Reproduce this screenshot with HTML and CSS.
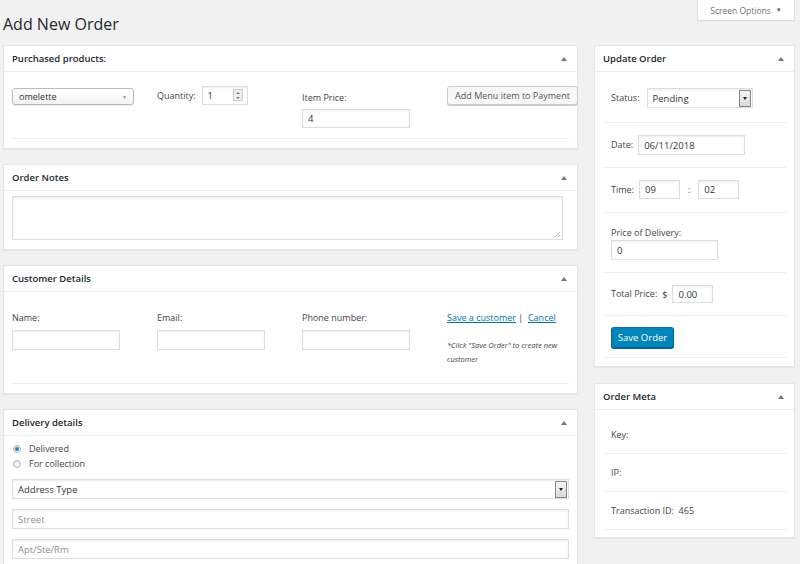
FILE: index.html
```html
<!DOCTYPE html>
<html>
<head>
<meta charset="utf-8">
<link rel="stylesheet" href="styles.css">
</head>
<body>
<div class="top">
  <h1 class="title">Add New Order</h1>
  <div class="screen-opts">Screen Options <span class="so-arrow">▼</span></div>
</div>
<div class="columns">
  <div class="main">
    <section class="card">
      <div class="card-head"><span>Purchased products:</span><span class="tri"></span></div>
      <div class="card-body pp-body">
        <div class="grid4">
          <div class="col"><div class="select-round">omelette<span class="sr-arrow">▼</span></div></div>
          <div class="col qty"><span class="lbl">Quantity:</span><div class="num"><input class="inp num-inp" type="text" value="1"><span class="spin"><span class="up"></span><span class="dn"></span></span></div></div>
          <div class="col price"><span class="lbl price-lbl">Item Price:</span><input class="inp price-inp" type="text" value="4"></div>
          <div class="col"><button class="btn-sec">Add Menu item to Payment</button></div>
        </div>
        <div class="hr hr-pp"></div>
      </div>
    </section>

    <section class="card">
      <div class="card-head"><span>Order Notes</span><span class="tri"></span></div>
      <div class="card-body notes-body">
        <div class="textarea"><span class="grip"></span></div>
      </div>
    </section>

    <section class="card">
      <div class="card-head"><span>Customer Details</span><span class="tri"></span></div>
      <div class="card-body cust-body">
        <div class="grid4">
          <div class="col"><span class="lbl">Name:</span><input class="inp cust-inp" type="text"></div>
          <div class="col"><span class="lbl">Email:</span><input class="inp cust-inp" type="text"></div>
          <div class="col"><span class="lbl">Phone number:</span><input class="inp cust-inp" type="text"></div>
          <div class="col"><span class="lbl links"><a href="#">Save a customer</a> <span class="pipe">|</span>&nbsp; <a href="#">Cancel</a></span><p class="note">*Click "Save Order" to create new customer</p></div>
        </div>
        <div class="hr hr-cust"></div>
      </div>
    </section>

    <section class="card">
      <div class="card-head"><span>Delivery details</span><span class="tri"></span></div>
      <div class="card-body deliv-body">
        <div class="radio"><span class="rad on"></span>Delivered</div>
        <div class="radio"><span class="rad"></span>For collection</div>
        <div class="select-sq wide">Address Type<span class="sq-btn"><span class="sq-tri"></span></span></div>
        <input class="inp full" type="text" placeholder="Street">
        <input class="inp full" type="text" placeholder="Apt/Ste/Rm">
      </div>
    </section>
  </div>

  <div class="side">
    <section class="card">
      <div class="card-head"><span>Update Order</span><span class="tri"></span></div>
      <div class="side-body">
        <div class="row r-status"><span class="lbl">Status:</span><div class="select-sq status">Pending<span class="sq-btn"><span class="sq-tri"></span></span></div></div>
        <div class="row r-date"><span class="lbl">Date:</span><input class="inp date-inp" type="text" value="06/11/2018"></div>
        <div class="row r-time"><span class="lbl">Time:</span><input class="inp time-inp" type="text" value="09"><span class="colon">:</span><input class="inp time-inp" type="text" value="02"></div>
        <div class="row r-deliv"><span class="lbl">Price of Delivery:</span><input class="inp deliv-inp" type="text" value="0"></div>
        <div class="row r-total"><span class="lbl">Total Price:</span><span class="dollar">$</span><input class="inp total-inp" type="text" value="0.00"></div>
        <div class="row r-save"><button class="btn-primary">Save Order</button></div>
      </div>
    </section>

    <section class="card">
      <div class="card-head"><span>Order Meta</span><span class="tri"></span></div>
      <div class="side-body">
        <div class="row meta">Key:</div>
        <div class="row meta">IP:</div>
        <div class="row meta">Transaction ID:&nbsp; 465</div>
      </div>
    </section>
  </div>
</div>
</body>
</html>
```

FILE: styles.css
```css
* { box-sizing: border-box; }
html, body { margin: 0; padding: 0; }
body {
  background: #f1f1f1;
  font-family: "Open Sans", "Noto Sans", sans-serif;
  font-size: 9px;
  color: #444;
  width: 800px;
  height: 564px;
  overflow: hidden;
}
.top {
  display: flex;
  justify-content: space-between;
  align-items: flex-start;
  height: 45px;
  padding: 0 5px 0 3px;
}
.title {
  margin: 13px 0 0 0;
  font-size: 16px;
  font-weight: 400;
  line-height: 22px;
  color: #23282d;
}
.screen-opts {
  width: 98px;
  height: 21px;
  background: #fff;
  border: 1px solid #ddd;
  border-top: none;
  box-shadow: 0 1px 1px -1px rgba(0,0,0,.1);
  color: #6d7277;
  font-size: 8.5px;
  display: flex;
  align-items: center;
  justify-content: center;
  gap: 5px;
}
.so-arrow { font-size: 6px; color: #555; }

.columns {
  display: flex;
  align-items: flex-start;
  gap: 16px;
  padding-left: 3px;
}
.main { width: 575px; display: flex; flex-direction: column; gap: 15px; }
.side { width: 201px; display: flex; flex-direction: column; gap: 16px; }

.card {
  background: #fff;
  border: 1px solid #e5e5e5;
  box-shadow: 0 1px 1px rgba(0,0,0,.04);
}
.card-head {
  height: 26px;
  border-bottom: 1px solid #eee;
  display: flex;
  align-items: center;
  justify-content: space-between;
  padding: 0 10px 0 8px;
  font-weight: 600;
  font-size: 9.5px;
  color: #23282d;
}
.tri {
  width: 0; height: 0;
  border-left: 3px solid transparent;
  border-right: 3px solid transparent;
  border-bottom: 4px solid #72777c;
}
.card-body { padding: 0 8px; }
.grid4 { display: grid; grid-template-columns: 145px 145px 145px 122px; }
.col { display: flex; flex-direction: column; align-items: flex-start; }
.lbl { line-height: 12px; color: #444; }

.inp {
  border: 1px solid #ddd;
  box-shadow: inset 0 1px 2px rgba(0,0,0,.07);
  background: #fff;
  font-family: inherit;
  font-size: 9.5px;
  color: #32373c;
  padding: 0 5px;
  height: 20px;
  outline: none;
  margin: 0;
}
.inp::placeholder { color: #8a8f94; }

/* purchased products */
.pp-body { padding-top: 14px; }
.select-round {
  margin-top: 2px;
  width: 122px;
  height: 17px;
  border: 1px solid #bbb;
  border-radius: 3px;
  background: linear-gradient(#fff, #f3f3f3);
  box-shadow: 0 1px 1px rgba(0,0,0,.08);
  padding: 0 6px;
  display: flex;
  align-items: center;
  justify-content: space-between;
  color: #333;
  font-size: 9px;
}
.sr-arrow { font-size: 5px; color: #888; }
.qty { flex-direction: row; align-items: center; gap: 6px; height: 19px; }
.num { position: relative; }
.num-inp { width: 46px; height: 19px; }
.spin {
  position: absolute;
  right: 5px; top: 3px;
  width: 10px; height: 12px;
  border: 1px solid #ccc;
  background: #eee;
  display: flex;
  flex-direction: column;
  align-items: center;
  justify-content: space-around;
}
.spin .up { width: 0; height: 0; border-left: 2px solid transparent; border-right: 2px solid transparent; border-bottom: 2px solid #777; }
.spin .dn { width: 0; height: 0; border-left: 2px solid transparent; border-right: 2px solid transparent; border-top: 2px solid #777; }
.price-lbl { margin-top: 6px; }
.price-inp { margin-top: 5px; width: 108px; height: 19px; }
.btn-sec {
  width: 131px;
  height: 19px;
  background: #f7f7f7;
  border: 1px solid #ccc;
  border-radius: 3px;
  box-shadow: 0 1px 0 #ccc;
  font-family: inherit;
  font-size: 9px;
  color: #555;
  padding: 0;
}
.hr { height: 1px; background: #eee; }
.hr-pp { margin-top: 10px; margin-bottom: 9px; }

/* notes */
.notes-body { padding: 5px 14px 9px 8px; }
.textarea {
  position: relative;
  height: 44px;
  border: 1px solid #ddd;
  box-shadow: inset 0 1px 2px rgba(0,0,0,.07);
}
.grip {
  position: absolute;
  right: 2px; bottom: 2px;
  width: 5px; height: 5px;
  background: linear-gradient(135deg, transparent 45%, #bbb 45%, #bbb 55%, transparent 55%, transparent 75%, #bbb 75%, #bbb 85%, transparent 85%);
}

/* customer */
.cust-body { padding-top: 20px; }
.cust-body .lbl { margin-bottom: 6px; }
.cust-inp { width: 108px; }
.links { white-space: nowrap; }
.links a { color: #0073aa; text-decoration: underline; }
.pipe { color: #444; }
.note {
  margin: 0;
  font-style: italic;
  font-size: 7.5px;
  line-height: 14px;
  color: #444;
  margin-top: 8px;
  width: 120px;
}
.hr-cust { margin-top: 17px; margin-bottom: 9px; }

/* delivery */
.deliv-body { padding: 5px 8px 6px 8px; }
.radio { display: flex; align-items: center; height: 15px; gap: 8px; padding-left: 1px; color: #444; }
.rad {
  width: 8px; height: 8px;
  border-radius: 50%;
  border: 1px solid #b4b9be;
  background: #f4f4f4;
  box-shadow: inset 0 1px 2px rgba(0,0,0,.1);
  display: flex; align-items: center; justify-content: center;
}
.rad.on::after { content: ""; width: 4px; height: 4px; border-radius: 50%; background: #1e8cbe; }
.select-sq {
  height: 20px;
  border: 1px solid #ddd;
  box-shadow: inset 0 1px 2px rgba(0,0,0,.07);
  display: flex;
  align-items: center;
  justify-content: space-between;
  padding: 0 1px 0 5px;
  color: #32373c;
  font-size: 9.5px;
}
.wide { margin-top: 8px; }
.sq-btn {
  width: 12px; height: 17px;
  border: 1px solid #888;
  background: linear-gradient(#f4f4f4, #d9d9d9);
  display: flex; align-items: center; justify-content: center;
}
.sq-tri { width: 0; height: 0; border-left: 2.5px solid transparent; border-right: 2.5px solid transparent; border-top: 3px solid #222; }
.full { display: block; width: 100%; margin-top: 10px; height: 20px; }

/* side */
.side-body { padding: 0 8px; }
.row {
  border-bottom: 1px solid #eee;
  padding: 12px 8px;
  display: flex;
  align-items: center;
}
.r-status { padding-top: 16px; padding-bottom: 14px; gap: 7px; }
.status { width: 106px; }
.r-date { gap: 5px; padding-top: 12px; padding-bottom: 12px; }
.date-inp { width: 107px; }
.r-time { padding-top: 12px; padding-bottom: 13px; gap: 5px; }
.time-inp { width: 41px; height: 19px; }
.colon { margin: 0 3px 0 3px; }
.r-deliv { flex-direction: column; align-items: flex-start; gap: 1px; padding-top: 14px; padding-bottom: 12px; }
.deliv-inp { width: 107px; }
.r-total { gap: 5px; }
.total-inp { width: 41px; height: 18px; }
.r-save { padding-top: 11px; padding-bottom: 9px; }
.btn-primary {
  width: 63px; height: 21px;
  background: #0085ba;
  border: 1px solid #0073aa;
  border-color: #0073aa #006799 #006799;
  border-radius: 3px;
  box-shadow: 0 1px 0 #006799;
  color: #fff;
  font-family: inherit;
  font-size: 9.5px;
  padding: 0;
}
.side-body > .r-save { margin-bottom: 8px; }
.meta { padding-top: 13px; padding-bottom: 12px; line-height: 12px; }
.meta:first-child { padding-top: 19px; }
.meta:last-child { margin-bottom: 7px; }
```
